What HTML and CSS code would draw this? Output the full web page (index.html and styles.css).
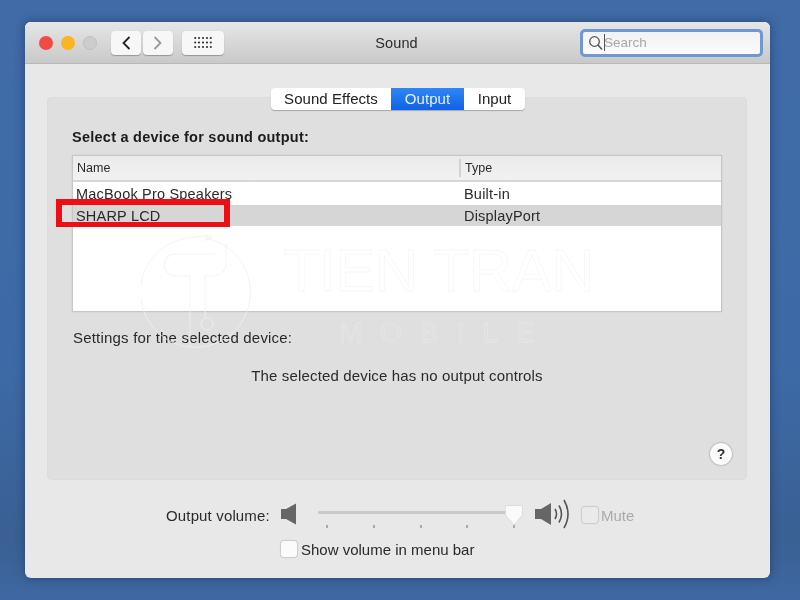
FILE: index.html
```html
<!DOCTYPE html>
<html lang="en">
<head>
<meta charset="utf-8">
<title>Sound</title>
<link rel="stylesheet" href="styles.css">
</head>
<body>
<div class="window">
  <header class="titlebar">
    <div class="lights">
      <span class="light red"></span>
      <span class="light yellow"></span>
      <span class="light gray"></span>
    </div>
    <div class="nav">
      <button class="tbtn back"><svg width="10" height="14" viewBox="0 0 10 14"><path d="M8.500 1 2.500 7l6 6" fill="none" stroke="#222" stroke-width="1.800"/></svg></button>
      <button class="tbtn fwd"><svg width="10" height="14" viewBox="0 0 10 14"><path d="m1.500 1 6 6-6 6" fill="none" stroke="#999" stroke-width="1.800"/></svg></button>
    </div>
    <button class="tbtn grid"><svg width="18" height="13" viewBox="0 0 18 13" fill="#333"><g id="d"><circle cx="1.200" cy="2" r="1.100"/><circle cx="5" cy="2" r="1.100"/><circle cx="9" cy="2" r="1.100"/><circle cx="13" cy="2" r="1.100"/><circle cx="16.800" cy="2" r="1.100"/></g><use href="#d" y="4.500"/><use href="#d" y="9"/></svg></button>
    <div class="title">Sound</div>
    <div class="search">
      <svg width="16" height="16" viewBox="0 0 16 16"><circle cx="6.500" cy="6.500" r="4.800" fill="none" stroke="#555" stroke-width="1.300"/><path d="m10 10 4 4.500" stroke="#555" stroke-width="1.500"/></svg>
      <span class="caret"></span>
      <span class="ph">Search</span>
    </div>
  </header>

  <main class="content">
    <nav class="tabs">
      <span class="tab fx">Sound Effects</span>
      <span class="tab on">Output</span>
      <span class="tab in">Input</span>
    </nav>
    <section class="panel">
      <h2 class="heading">Select a device for sound output:</h2>
      <div class="table">
        <div class="row head"><span class="c1">Name</span><span class="c2">Type</span></div>
        <div class="row r1"><span class="c1">MacBook Pro Speakers</span><span class="c2">Built-in</span></div>
        <div class="row r2"><span class="c1">SHARP LCD</span><span class="c2">DisplayPort</span></div>
      </div>
      <p class="settings">Settings for the selected device:</p>
      <p class="none">The selected device has no output controls</p>
      <div class="helprow"><span class="help">?</span></div>
    </section>

    <div class="volume">
      <span class="vlabel">Output volume:</span>
      <svg class="spk" width="16" height="22" viewBox="0 0 16 22"><path d="M0 6h5l10-5.500v21L5 16H0z" fill="#666"/></svg>
      <div class="slider">
        <div class="track"></div>
        <div class="ticks"><i></i><i></i><i></i><i></i><i></i></div>
        <svg class="thumb" width="18" height="22" viewBox="0 0 18 22"><path d="M2 .5h14a1.500 1.500 0 0 1 1.500 1.500v8L9 20 .5 10V2A1.500 1.500 0 0 1 2 .5z" fill="#fafafa" stroke="#ddd"/></svg>
      </div>
      <svg class="spkbig" width="37" height="30" viewBox="0 0 37 30"><path d="M0 10h6l10-6v22L6 20H0z" fill="#666"/><path d="M20 10q3 5 0 10M24 6.500q5 8.500 0 17M29 1q8 14 0 28" fill="none" stroke="#555" stroke-width="1.600"/></svg>
      <span class="check mute"></span>
      <span class="mlabel">Mute</span>
    </div>
    <div class="menubar">
      <span class="check"></span>
      <span>Show volume in menu bar</span>
    </div>
  </main>

  <div class="redbox"></div>
  <div class="wm">
    <svg class="wmlogo" width="114" height="118" viewBox="0 0 114 118" fill="none" stroke="#f0f0f0" stroke-width=".8"><path d="M63 4A55 55 0 1 1 50 3.500Q60 1.500 70 3"/><path d="m62 0 9 3-8 4"/><path d="M74 20H34a11 11 0 0 0 0 22h15v70M64 84V42h9a12 12 0 0 0 12-12V10"/><circle cx="66" cy="90" r="6"/></svg>
    <span class="wmtitle">TIEN TRAN</span>
    <span class="wmsub">MOBILE</span>
  </div>
</div>
</body>
</html>
```
FILE: styles.css
```css
* { box-sizing: border-box; }
html, body { height: 100%; }
body {
  margin: 0;
  padding: 22px 30px 22px 25px;
  overflow: hidden;
  background: linear-gradient(180deg, #406ba6 0%, #3d6aa6 60%, #3a6094 90%, #3f68a2 100%);
  font-family: "Liberation Sans", Arial, sans-serif;
  color: #222;
}
.window {
  position: relative;
  height: 556px;
  background: #e8e8e8;
  border-radius: 6px;
  overflow: hidden;
  box-shadow: 0 0 10px rgba(20, 40, 80, .55), 0 1px 0 #f6f6f6 inset;
  filter: blur(.35px);
}
.titlebar {
  display: flex;
  align-items: center;
  height: 42px;
  padding: 0 7px 0 14px;
  background: linear-gradient(180deg, #e6e6e6 0%, #c9c9c9 100%);
  border-bottom: 1px solid #b8b8b8;
}
.lights { display: flex; gap: 8px; width: 72px; }
.light { width: 14px; height: 14px; border-radius: 50%; }
.red { background: #f34a45; }
.yellow { background: #fab424; }
.gray { background: #cdcdcd; border: 1px solid #c0c0c0; }
.nav { display: flex; gap: 2px; margin-right: 9px; }
.tbtn {
  display: flex;
  align-items: center;
  justify-content: center;
  width: 30px;
  height: 24px;
  padding: 0;
  border: 0;
  border-radius: 4px;
  background: #f7f7f7;
  box-shadow: 0 1px 1px rgba(0, 0, 0, .28);
}
.grid { width: 42px; }
.title {
  flex: 1;
  padding-right: 11px;
  text-align: center;
  font-size: 14.500px;
  letter-spacing: .1px;
  color: #2c2c2c;
}
.search {
  display: flex;
  align-items: center;
  width: 183px;
  height: 28px;
  padding-left: 5px;
  background: linear-gradient(180deg, #f2f2f2, #fbfbfb);
  border: 3px solid #6f97d2;
  border-radius: 5px;
}
.caret { width: 1px; height: 17px; background: #555; }
.ph { font-size: 13.500px; color: #a8a8a8; margin-left: -1px; }
.content { padding: 24px 23px 0 22px; }
.tabs {
  position: relative;
  z-index: 1;
  display: flex;
  width: 254px;
  height: 22px;
  margin: 0 0 -13px 224px;
  background: #fff;
  border-radius: 4px;
  box-shadow: 0 1px 1px rgba(0, 0, 0, .25);
  font-size: 15px;
  line-height: 21px;
  text-align: center;
  letter-spacing: .05px;
}
.tab { display: block; }
.fx { width: 120px; }
.on { width: 73px; background: linear-gradient(180deg, #2f86f6, #1062e6); color: #e6f0ff; }
.in { width: 61px; }
.panel {
  height: 383px;
  padding: 31px 24px 0;
  background: #dfdfdf;
  border: 1px solid #dcdcdc;
  border-radius: 4px;
}
.heading {
  margin: 0 0 9px;
  font-size: 14.500px;
  line-height: 17px;
  font-weight: bold;
  color: #1c1c1c;
  letter-spacing: .25px;
}
.table {
  width: 650px;
  height: 157px;
  background: #fff;
  border: 1px solid #c6c6c6;
  box-shadow: 0 0 1px rgba(0,0,0,.2);
}
.row { display: flex; align-items: center; font-size: 14.500px; color: #2a2a2a; letter-spacing: .2px; }
.c1 { width: 388px; padding-left: 3px; }
.c2 { padding-left: 3px; }
.head {
  height: 26px;
  background: linear-gradient(180deg, #ebebeb, #f1f1f1);
  border-bottom: 2px solid #d6d6d6;
  font-size: 12.500px;
  letter-spacing: 0;
}
.head .c1 { width: 386px; padding-left: 4px; }
.head .c2 { padding-left: 4px; border-left: 2px solid #d2d2d2; line-height: 18px; }
.r1 { height: 23px; }
.r2 { height: 21px; background: #d6d6d6; }
.settings { margin: 17px 0 0 1px; font-size: 15px; line-height: 18px; color: #2a2a2a; letter-spacing: .2px; }
.none { margin: 20px 0 0; text-align: center; font-size: 15px; line-height: 18px; color: #2a2a2a; letter-spacing: .15px; }
.helprow { display: flex; justify-content: flex-end; margin: 58px -10px 0 0; }
.help {
  width: 22px;
  height: 22px;
  border-radius: 50%;
  background: #fbfbfb;
  box-shadow: 0 0 2px rgba(0, 0, 0, .45);
  text-align: center;
  font-size: 14px;
  font-weight: bold;
  line-height: 22px;
  color: #333;
}
.volume {
  display: flex;
  align-items: center;
  height: 38px;
  margin: 16px 0 0 119px;
  font-size: 15px;
  letter-spacing: .15px;
  color: #2a2a2a;
}
.vlabel { width: 115px; }
.spk { margin-top: -2px; }
.slider { position: relative; width: 216px; height: 38px; margin-left: 21px; }
.track { position: absolute; left: 0; right: 12px; top: 15px; height: 3px; background: #c9c9c9; border-radius: 2px; }
.ticks { display: flex; justify-content: space-between; width: 189px; margin: 29px 0 0 8px; }
.ticks i { width: 2px; height: 3px; background: #aaa; }
.thumb { position: absolute; left: 187px; top: 9px; }
.spkbig { margin: -3px 0 0 1px; }
.check {
  display: block;
  width: 16px;
  height: 16px;
  border-radius: 3px;
  background: #fbfbfb;
  box-shadow: 0 0 1px 1px rgba(0, 0, 0, .13);
}
.mute { margin-left: 10px; background: #eaeaea; }
.mlabel { margin-left: 3px; color: #aaa; letter-spacing: 0; }
.menubar {
  display: flex;
  align-items: center;
  gap: 4px;
  height: 22px;
  margin: 4px 0 0 234px;
  font-size: 15px;
  color: #2a2a2a;
}
.redbox {
  position: absolute;
  left: 31px;
  top: 177px;
  width: 174px;
  height: 28px;
  border: 6px solid #ee0f16;
  border-bottom-width: 5px;
}
.wm { position: absolute; inset: 0; pointer-events: none; }
.wmlogo { position: absolute; left: 116px; top: 212px; }
.wmtitle {
  position: absolute;
  left: 258px;
  top: 214px;
  font-size: 60px;
  line-height: 70px;
  color: transparent;
  -webkit-text-stroke: .4px #f0f0f0;
  letter-spacing: -.5px;
}
.wmsub {
  position: absolute;
  left: 314px;
  top: 295px;
  font-size: 28px;
  line-height: 32px;
  color: transparent;
  -webkit-text-stroke: .4px #eaeaea;
  letter-spacing: 18px;
}
```
